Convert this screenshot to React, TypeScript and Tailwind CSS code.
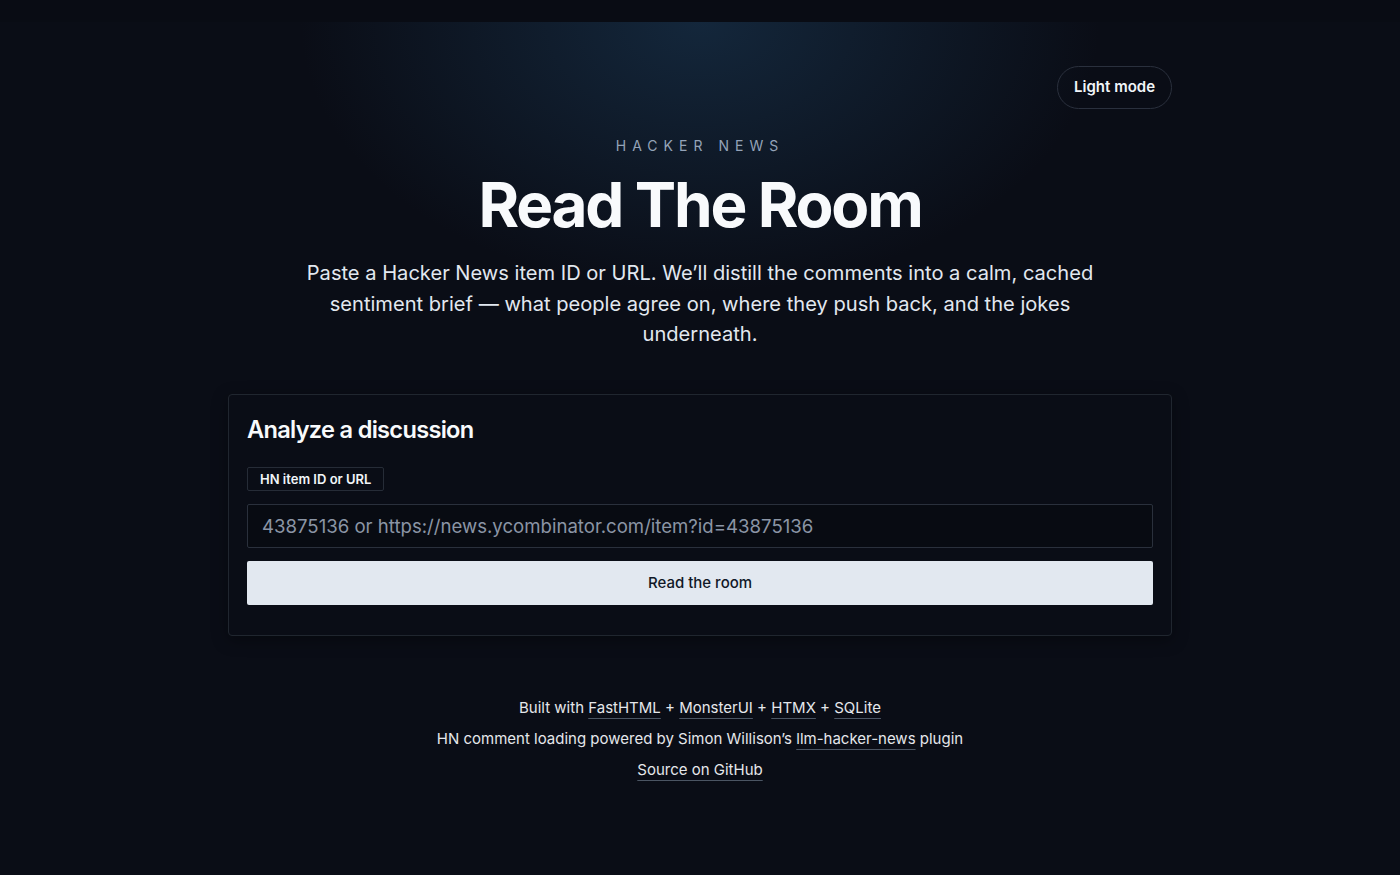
import React from "react";

function FLink({ children }: { children: React.ReactNode }) {
  return (
    <a href="#" className="underline decoration-[#4b5563] decoration-1 underline-offset-[5px] text-[#e5e7eb]">
      {children}
    </a>
  );
}

export default function App() {
  return (
    <div className="min-h-screen bg-[#090c14] pt-[22px] text-[#e5e7eb]" style={{ fontFamily: "Inter, 'Noto Sans', sans-serif" }}>
      <div className="min-h-[853px] bg-[#0a0d16] bg-[radial-gradient(ellipse_400px_270px_at_50%_0%,rgba(26,56,84,0.6),rgba(10,13,22,0)_100%)] pt-[44px]">
        <div className="mx-auto max-w-[944px]">
          <div className="flex justify-end">
            <button className="h-[43px] rounded-full border border-[#2a303d] px-4 text-[15px] font-semibold text-[#f1f5f9]">
              Light mode
            </button>
          </div>
          <div className="mt-[27px] text-center text-[14px] leading-5 tracking-[0.43em] text-[#94a3b8]">
            HACKER NEWS
          </div>
          <h1 className="mt-[14px] text-center text-[62px] font-bold leading-[70px] tracking-[-0.035em] text-[#f8fafc]">
            Read The Room
          </h1>
          <p className="mx-auto mt-[18px] max-w-[810px] text-center text-[20.1px] leading-[30.5px] text-[#e2e8f0]">
            Paste a Hacker News item ID or URL. We’ll distill the comments into a calm, cached sentiment brief — what people agree on, where they push back, and the jokes underneath.
          </p>
          <div className="mt-[44px] rounded-[4px] border border-[#20262f] bg-[#0a0d16] px-[18px] pt-[19px] pb-[30px] shadow-[0_4px_16px_rgba(0,0,0,0.35)]">
            <h2 className="text-[23.6px] font-semibold leading-8 tracking-[-0.03em] text-[#f8fafc]">Analyze a discussion</h2>
            <div className="mt-[20px]">
              <span className="inline-flex h-[24px] items-center rounded-[2px] border border-[#262c37] px-[12px] text-[13px] font-semibold text-[#f1f5f9]">
                HN item ID or URL
              </span>
            </div>
            <input
              className="mt-[13px] block h-[44px] w-full rounded-[2px] border border-[#2a303c] bg-[#080b12] px-[14px] text-[18.6px] text-[#e5e7eb] placeholder:text-[#8b95a5] outline-none"
              placeholder="43875136 or https://news.ycombinator.com/item?id=43875136"
            />
            <button className="mt-[13px] block h-[44px] w-full rounded-[2px] bg-[#e2e8f0] text-[15px] font-medium text-[#111827]">
              Read the room
            </button>
          </div>
          <div className="mt-[56px] text-center text-[15px] leading-[31px] text-[#e5e7eb]">
            <div>
              Built with <FLink>FastHTML</FLink> + <FLink>MonsterUI</FLink> + <FLink>HTMX</FLink> + <FLink>SQLite</FLink>
            </div>
            <div>
              HN comment loading powered by Simon Willison’s <FLink>llm-hacker-news</FLink> plugin
            </div>
            <div>
              <FLink>Source on GitHub</FLink>
            </div>
          </div>
        </div>
      </div>
    </div>
  );
}
